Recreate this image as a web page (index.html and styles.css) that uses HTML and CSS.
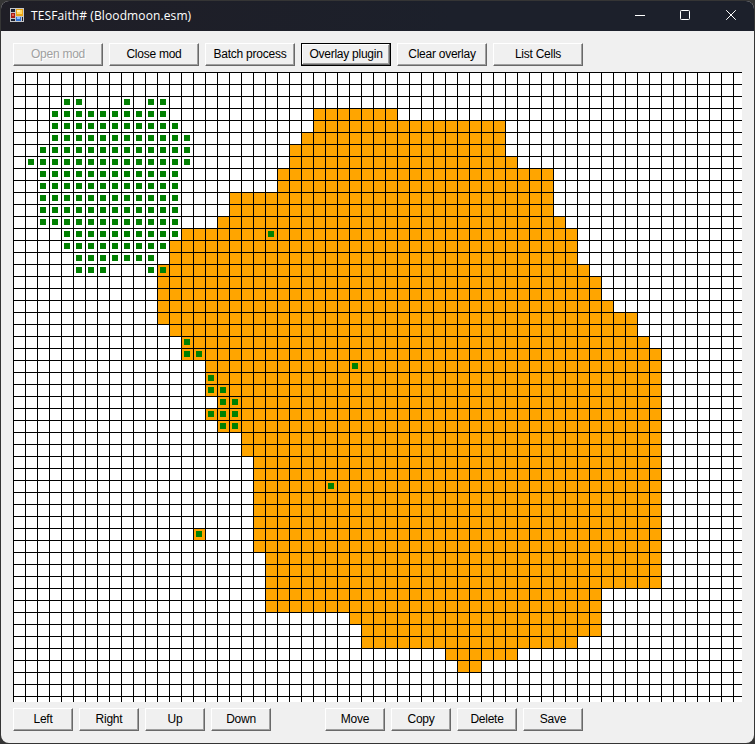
FILE: index.html
```html
<!DOCTYPE html>
<html lang="en">
<head>
<meta charset="utf-8">
<title>TESFaith# (Bloodmoon.esm)</title>
<link rel="stylesheet" href="styles.css">
</head>
<body>
<div class="window">
  <header class="titlebar">
    <svg class="app-icon" width="14" height="14" viewBox="0 0 14 14" shape-rendering="crispEdges">
      <rect width="14" height="14" fill="#c3c5c8"/>
      <rect x="1" y="1" width="4" height="3" fill="#1b2030"/>
      <rect x="1" y="5" width="4" height="5" fill="#a51d16"/>
      <rect x="2" y="6" width="2" height="2" fill="#e8604c"/>
      <rect x="1" y="11" width="4" height="2" fill="#1b2030"/>
      <rect x="6" y="1" width="7" height="7" fill="#e9a413"/>
      <rect x="7" y="2" width="5" height="4" fill="#ffd863"/>
      <rect x="7" y="2" width="3" height="2" fill="#ffeeb0"/>
      <rect x="6" y="9" width="5" height="4" fill="#3272d2"/>
      <rect x="7" y="9" width="3" height="2" fill="#8fc0ff"/>
      <rect x="12" y="9" width="1" height="4" fill="#1b2030"/>
    </svg>
    <span class="title">TESFaith# (Bloodmoon.esm)</span>
    <div class="controls">
      <svg width="10" height="10" viewBox="0 0 10 10"><path d="M0 5.5H10" stroke="#fff" fill="none"/></svg>
      <svg width="10" height="10" viewBox="0 0 10 10"><rect x=".5" y=".5" width="9" height="9" rx=".8" stroke="#fff" fill="none"/></svg>
      <svg class="close" width="10" height="10" viewBox="0 0 10 10"><path d="M.2 .2L9.8 9.8M9.8 .2L.2 9.8" stroke="#fff" fill="none"/></svg>
    </div>
  </header>
  <main class="client">
    <div class="toolbar">
      <button class="btn wide" disabled>Open mod</button>
      <button class="btn wide">Close mod</button>
      <button class="btn wide">Batch process</button>
      <button class="btn wide default">Overlay plugin</button>
      <button class="btn wide">Clear overlay</button>
      <button class="btn wide">List Cells</button>
    </div>
    <svg class="map" id="map" width="729" height="630" viewBox="0 0 729 630" shape-rendering="crispEdges"></svg>
    <div class="toolbar bottom">
      <button class="btn">Left</button>
      <button class="btn">Right</button>
      <button class="btn">Up</button>
      <button class="btn">Down</button>
      <button class="btn group-start">Move</button>
      <button class="btn">Copy</button>
      <button class="btn">Delete</button>
      <button class="btn">Save</button>
    </div>
  </main>
</div>
<script src="map.js"></script>
</body>
</html>
```
FILE: styles.css
```css
* { box-sizing: border-box; }
body {
  margin: 0;
  height: 744px;
  padding: 1px;
  background: #353535;
  overflow: hidden;
  font-family: "Liberation Sans", Arial, sans-serif;
}
.window {
  width: 753px;
  height: 742px;
  border-radius: 8px;
  overflow: hidden;
  background: #f0f0f0;
}
.titlebar {
  display: flex;
  align-items: center;
  height: 30px;
  padding: 0 18px 0 9px;
  background: linear-gradient(90deg, #1f1e26, #1c202b 60%);
  color: #fff;
}
.app-icon { display: block; margin-bottom: 2px; }
.title {
  margin-left: 7px;
  padding-bottom: 1px;
  font: 12px/16px "Open Sans", "Noto Sans", sans-serif;
  letter-spacing: 0.11px;
  white-space: nowrap;
}
.controls { display: flex; gap: 35px; margin-left: auto; padding-bottom: 2px; }
.controls svg { display: block; }
.controls .close { margin-left: 1px; }
.client { padding: 12px; }
.toolbar { display: flex; gap: 6px; }
.toolbar.bottom { margin-top: 6px; }
.btn {
  width: 60px;
  height: 23px;
  padding: 0;
  border: 1px solid;
  border-color: #fff #696969 #696969 #fff;
  box-shadow: inset -1px -1px #a0a0a0;
  background: #f0f0f0;
  color: #000;
  font: 12px/13px "Liberation Sans", Arial, sans-serif;
  letter-spacing: -0.25px;
  text-align: center;
  white-space: nowrap;
}
.btn.wide { width: 90px; }
.btn.group-start { margin-left: 48px; }
.btn:disabled { color: #a0a0a0; text-shadow: 1px 1px #fff; }
.btn.default {
  border-color: #000;
  box-shadow: inset -1px -1px #696969, inset 1px 1px #fff, inset -2px -2px #a0a0a0;
}
.map { display: block; margin-top: 6px; background: #fff; }
.land { fill: #ffa500; }
.mark { fill: #008000; }
.line { fill: #000; }
```
FILE: map.js
```js
const CELL = 12;
const WIDTH = 729;
const HEIGHT = 630;

// Exterior cells: [first row, last row, first column, last column]
const land = [
  [3, 3, 25, 31], [4, 4, 25, 40], [5, 5, 24, 40], [6, 6, 23, 40], [7, 7, 23, 41],
  [8, 9, 22, 44], [10, 11, 18, 44], [12, 12, 17, 45], [13, 13, 14, 46],
  [14, 15, 13, 46], [16, 16, 12, 47], [17, 18, 12, 48], [19, 19, 12, 49],
  [20, 20, 12, 51], [21, 21, 13, 51], [22, 22, 14, 52], [23, 23, 14, 53],
  [24, 26, 16, 53], [27, 27, 17, 53], [28, 28, 16, 53], [29, 29, 17, 53],
  [30, 31, 19, 53], [32, 39, 20, 53], [40, 42, 21, 53], [43, 44, 21, 48],
  [45, 45, 28, 48], [46, 46, 29, 48], [47, 47, 29, 46], [48, 48, 36, 41],
  [49, 49, 37, 38], [38, 38, 15, 15]
];

// Cells changed by the loaded mod, same layout
const marks = [
  [2, 2, 4, 5], [2, 2, 9, 9], [2, 2, 11, 12], [3, 3, 3, 12], [4, 4, 3, 13],
  [5, 5, 3, 14], [6, 6, 2, 14], [7, 7, 1, 14], [8, 12, 2, 13], [13, 13, 4, 13],
  [14, 14, 4, 12], [15, 15, 5, 11], [16, 16, 5, 7], [16, 16, 11, 12],
  [13, 13, 21, 21], [22, 22, 14, 14], [23, 23, 14, 15], [24, 24, 28, 28],
  [25, 25, 16, 16], [26, 26, 16, 17], [27, 27, 17, 18], [28, 28, 16, 18],
  [29, 29, 17, 18], [34, 34, 26, 26], [38, 38, 15, 15]
];

const map = document.getElementById("map");

function rect(cls, x, y, w, h) {
  const r = document.createElementNS("http://www.w3.org/2000/svg", "rect");
  r.setAttribute("class", cls);
  r.setAttribute("x", x);
  r.setAttribute("y", y);
  r.setAttribute("width", w);
  r.setAttribute("height", h);
  map.appendChild(r);
}

for (const [r0, r1, c0, c1] of land) {
  rect("land", c0 * CELL, r0 * CELL, (c1 - c0 + 1) * CELL, (r1 - r0 + 1) * CELL);
}
for (let x = 0; x < WIDTH; x += CELL) rect("line", x, 0, 1, HEIGHT);
for (let y = 0; y < HEIGHT; y += CELL) rect("line", 0, y, WIDTH, 1);
for (const [r0, r1, c0, c1] of marks) {
  for (let r = r0; r <= r1; r++) {
    for (let c = c0; c <= c1; c++) rect("mark", c * CELL + 3, r * CELL + 3, 6, 6);
  }
}
```
